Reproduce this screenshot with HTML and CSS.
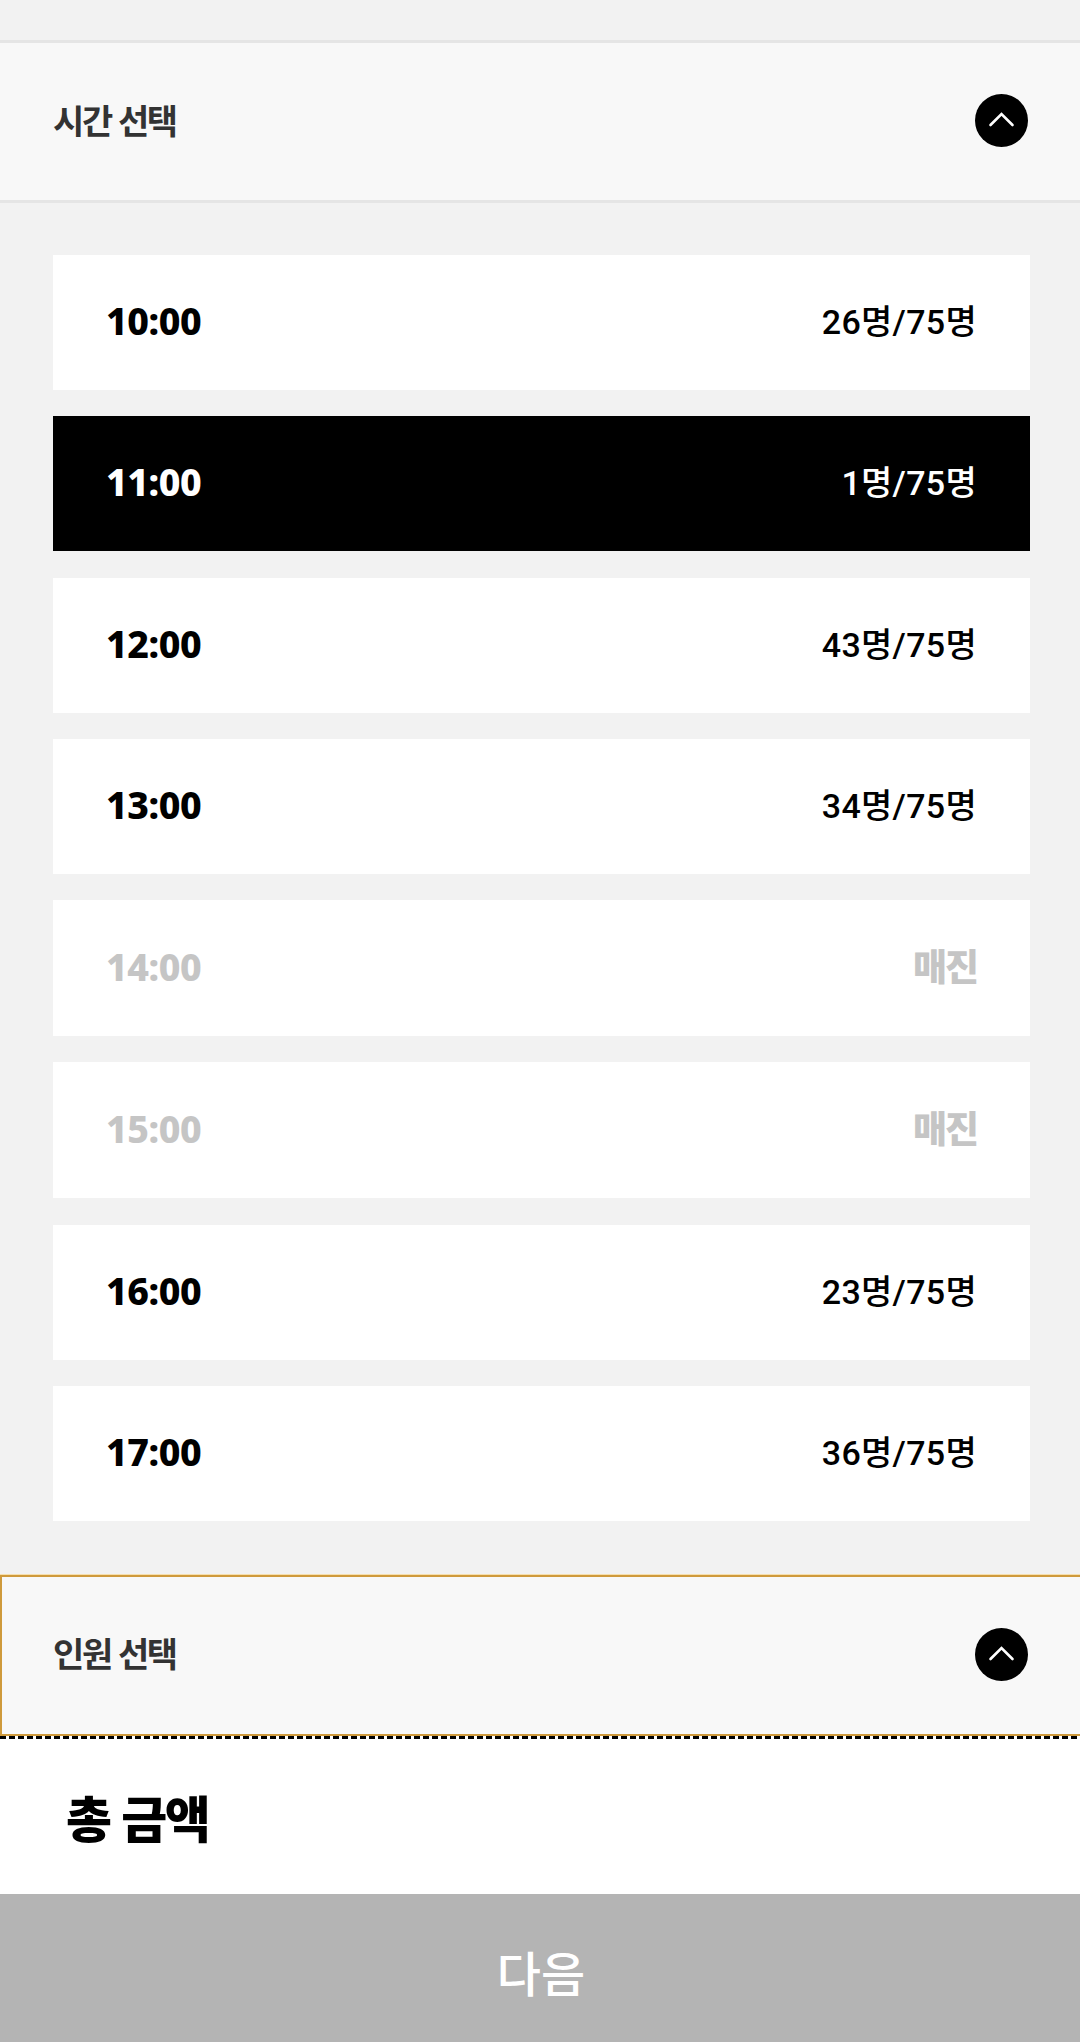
FILE: index.html
```html
<!DOCTYPE html>
<html lang="ko">
<head>
    <meta charset="UTF-8">
    <meta name="viewport" content="width=device-width, initial-scale=1.0">
    <title>시간 선택</title>
    <link rel="stylesheet" href="styles.css">
</head>
<body>
    <!-- 시간 선택 -->
    <div class="section-header">
        <h2 class="section-title">시간 선택</h2>
        <svg class="toggle-icon" viewBox="0 0 53 53">
            <circle cx="26.5" cy="26.5" r="26.5" fill="#000"/>
            <path d="M15.5 31 26.5 20l11 11" fill="none" stroke="#fff" stroke-width="2.6" stroke-linecap="round"/>
        </svg>
    </div>

    <ul class="time-list">
        <li class="time-item"><span class="time">10:00</span><span class="count">26명/75명</span></li>
        <li class="time-item selected"><span class="time">11:00</span><span class="count">1명/75명</span></li>
        <li class="time-item"><span class="time">12:00</span><span class="count">43명/75명</span></li>
        <li class="time-item"><span class="time">13:00</span><span class="count">34명/75명</span></li>
        <li class="time-item soldout"><span class="time">14:00</span><span class="count">매진</span></li>
        <li class="time-item soldout"><span class="time">15:00</span><span class="count">매진</span></li>
        <li class="time-item"><span class="time">16:00</span><span class="count">23명/75명</span></li>
        <li class="time-item"><span class="time">17:00</span><span class="count">36명/75명</span></li>
    </ul>

    <!-- 인원 선택 -->
    <div class="section-header focused">
        <h2 class="section-title">인원 선택</h2>
        <svg class="toggle-icon" viewBox="0 0 53 53">
            <circle cx="26.5" cy="26.5" r="26.5" fill="#000"/>
            <path d="M15.5 31 26.5 20l11 11" fill="none" stroke="#fff" stroke-width="2.6" stroke-linecap="round"/>
        </svg>
    </div>

    <!-- 하단 금액 / 다음 버튼 -->
    <div class="dash-line"></div>
    <div class="total">
        <strong class="total-label">총 금액</strong>
    </div>
    <button class="next-btn" type="button">다음</button>
</body>
</html>
```

FILE: styles.css
```css
* {
    margin: 0;
    padding: 0;
    box-sizing: border-box;
}

body {
    height: 2042px;
    padding-top: 40px;
    display: flex;
    flex-direction: column;
    overflow: hidden;
    font-family: Roboto, "Noto Sans CJK KR", sans-serif;
    background-color: #f2f2f2;
    color: #000;
}

.section-header {
    flex: none;
    height: 163px;
    padding: 0 52px 2px 53px;
    display: flex;
    justify-content: space-between;
    align-items: center;
    background-color: #f8f8f8;
    border-top: 3px solid #e5e5e5;
    border-bottom: 3px solid #e5e5e5;
}

.section-title {
    padding-bottom: 3px;
    font-family: "Noto Sans CJK KR", sans-serif;
    font-size: 34px;
    font-weight: 700;
    letter-spacing: -2.4px;
    color: #333;
}

.toggle-icon {
    width: 53px;
    height: 53px;
}

.section-header.focused {
    border: 2px solid #cf9a3c;
    border-right: 0;
    height: 161px;
    margin-top: 1px;
    padding-left: 51px;
    padding-bottom: 3px;
    box-shadow: 0 0 0 1px #f6dfae;
}

.time-list {
    flex: none;
    height: 1371px;
    padding: 52px 50px 53px 53px;
    display: flex;
    flex-direction: column;
    gap: 26px;
    list-style: none;
}

.time-item {
    height: 135px;
    padding: 0 53px;
    display: flex;
    justify-content: space-between;
    align-items: center;
    background-color: #fff;
}

.time-item:nth-child(3),
.time-item:nth-child(7) {
    margin-top: 1px;
}

.time {
    padding-bottom: 4px;
    font-family: "Noto Sans", sans-serif;
    font-size: 37.5px;
    font-weight: 800;
    letter-spacing: -0.4px;
}

.count {
    padding-bottom: 6px;
    font-size: 34px;
    font-weight: 500;
    letter-spacing: 0.3px;
}

.selected {
    background-color: #000;
    color: #fff;
}

.soldout {
    height: 136px;
    color: #c5c5c5;
}

.soldout .count {
    padding-bottom: 6px;
    font-family: "Noto Sans CJK KR", sans-serif;
    font-size: 37px;
    font-weight: 800;
    letter-spacing: -2px;
}

.dash-line {
    flex: none;
    height: 3px;
    background: repeating-linear-gradient(90deg, #000 0 6px, #fff 6px 9px);
}

.total {
    flex: none;
    height: 155px;
    padding-left: 66px;
    display: flex;
    align-items: center;
    background-color: #fff;
}

.total-label {
    padding-bottom: 1px;
    font-family: "Noto Sans CJK KR", sans-serif;
    font-size: 50px;
    font-weight: 900;
    letter-spacing: -2.4px;
}

.next-btn {
    flex: 1;
    padding: 5px 0 0 2px;
    border: 0;
    background-color: #b4b4b4;
    color: #fff;
    font-family: "Noto Sans CJK KR", sans-serif;
    font-size: 48px;
    font-weight: 500;
}
```
